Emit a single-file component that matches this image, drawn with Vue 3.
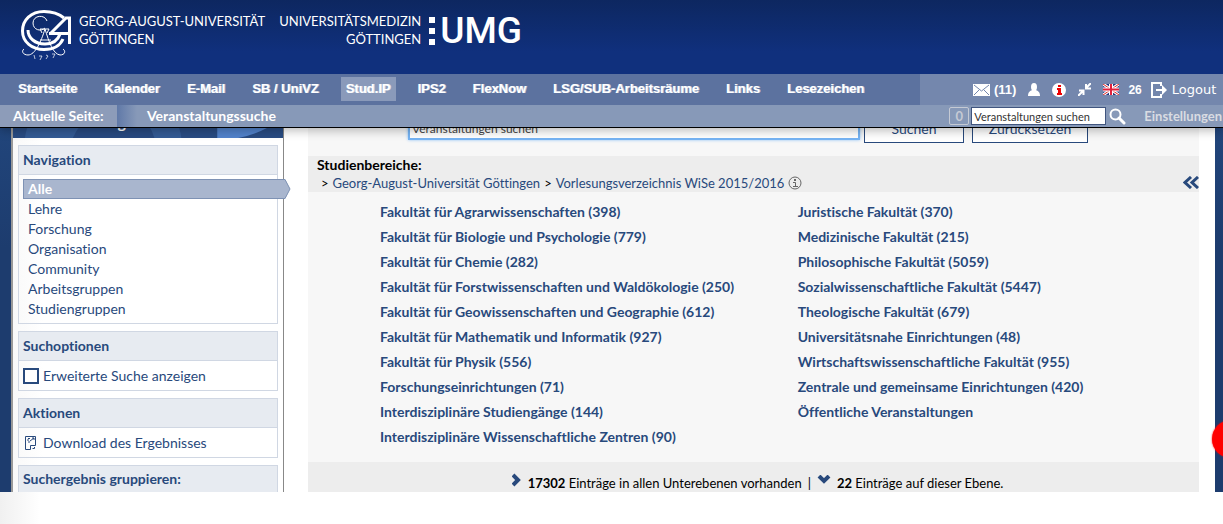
<template>
  <div class="page">
    <header class="header">
      <div class="brand">
        <svg class="seal" width="54" height="52" viewBox="0 0 54 52" fill="none" stroke="#fff" aria-hidden="true">
          <path d="M44 9C38 4 31 2.500 24 2.500C11 2.500 2.500 11 2.500 22S12 40.500 24 40.500C33 40.500 40 37 43 30" stroke-width="3" />
          <path d="M8 21c0 8 7 14 17 14c8 0 13-4 15-10" stroke-width="3" />
          <path d="M30 25L46 9h3.500v26" stroke-width="3" />
          <path d="M29 24.500h20" stroke-width="3" />
          <path d="M27 12c-2-7-14-6-14 2c0 7 8 9 12 5" stroke-width="1" />
          <path d="M25 20C21 33 15 46 8 46c-5 0-7-4-4-6M25 20C29 33 33 45 40 46c5 0 6-4 3-6M20 31h11M22 24l-2-4h9l-2 4" stroke-width="1" />
          <path d="M14 46l1 4M19 47h3l-2 4M26 46l2 1-2 3M32 45h3l-2 4" stroke-width="1" opacity="0.7" />
        </svg>
        <div class="brand-text">GEORG-AUGUST-UNIVERSITÄT<br />GÖTTINGEN</div>
        <div class="brand-text med">UNIVERSITÄTSMEDIZIN<br />GÖTTINGEN</div>
        <div class="dots" aria-hidden="true"><i></i><i></i><i></i></div>
        <div class="umg">UMG</div>
      </div>

      <div class="main-bar">
        <nav class="main-nav">
          <a v-for="item in mainNav" :key="item" href="#" :class="{ active: item === 'Stud.IP' }">{{ item }}</a>
        </nav>
        <div class="tools">
          <a href="#" class="mail">
            <svg width="17" height="12" viewBox="0 0 17 12" aria-hidden="true"><path d="M0 0h17v12H0z" fill="#fff" /><path d="M1 1l7.500 6L16 1M1 11l5-5M16 11l-5-5" fill="none" stroke="#7487ad" /></svg>
            (11)
          </a>
          <a href="#" class="tool" aria-label="Profil">
            <svg width="12" height="13" viewBox="0 0 12 13" fill="#fff"><ellipse cx="6" cy="4" rx="3" ry="4" /><path d="M0 13c0-4 2-5 4-6h4c2 1 4 2 4 6z" /></svg>
          </a>
          <a href="#" class="tool" aria-label="Information">
            <svg width="14" height="14" viewBox="0 0 14 14"><circle cx="7" cy="7" r="7" fill="#fff" /><path d="M6 2h3v2H6zM5 5h4v5h1v2H5v-2h1V7H5z" fill="#e00" /></svg>
          </a>
          <a href="#" class="tool" aria-label="Verkleinern">
            <svg width="13" height="13" viewBox="0 0 13 13" fill="none" stroke="#fff" stroke-width="2"><path d="M13 0L8 5M8 1v4.500h5" /><path d="M0 13l5-5M1 7.500h4.500V12" /></svg>
          </a>
          <a href="#" class="tool" aria-label="English">
            <svg width="16" height="11" viewBox="0 0 16 11"><path d="M0 0h16v11H0z" fill="#26377e" /><path d="M0 0l16 11M16 0L0 11" stroke="#fff" stroke-width="3" /><path d="M0 0l16 11M16 0L0 11" stroke="#d22" /><path d="M8 0v11M0 5.500h16" stroke="#fff" stroke-width="4" /><path d="M8 0v11M0 5.500h16" stroke="#e1203c" stroke-width="2" /></svg>
          </a>
          <span class="count">26</span>
          <a href="#" class="logout">
            <svg width="17" height="16" viewBox="0 0 17 16" fill="none" stroke="#fff" stroke-width="2"><path d="M10 4V1H1v14h9v-3" /><path d="M5 8h7" /><path d="M11 3l5 5-5 5z" fill="#fff" stroke="none" /></svg>
            Logout
          </a>
        </div>
      </div>

      <div class="sub-bar">
        <span class="current-label">Aktuelle Seite:</span>
        <span class="current">Veranstaltungssuche</span>
        <form class="quick" @submit.prevent>
          <span class="badge">0</span>
          <input v-model="quickSearch" type="text" aria-label="Schnellsuche" />
          <button type="submit" aria-label="Suche starten">
            <svg width="17" height="17" viewBox="0 0 17 17" fill="none" stroke="#fff"><circle cx="6.500" cy="6.500" r="5" stroke-width="2" /><path d="M10 10l5 5" stroke-width="3" stroke-linecap="round" /></svg>
          </button>
          <a href="#">Einstellungen</a>
        </form>
      </div>
    </header>

    <div class="body">
      <aside class="sidebar">
        <div class="banner">
          <svg viewBox="0 0 271 40" preserveAspectRatio="none" aria-hidden="true">
            <path d="M0 0h271v40H0z" fill="#294c83" />
            <path d="M12 40Q14 20 35 0h110q22 20 24 40z" fill="#345b95" />
            <path d="M60 40Q66 26 80 16h45q13 10 17 24z" fill="#284a81" />
            <path d="M205 40V0h66v20q-20 15-45 20z" fill="#5283cc" />
          </svg>
          <span>Veranstaltungssuche</span>
        </div>

        <section class="box">
          <h2>Navigation</h2>
          <ul class="nav-list">
            <li v-for="item in sideNav" :key="item" :class="{ active: item === 'Alle' }">
              <a href="#">{{ item }}</a>
              <svg v-if="item === 'Alle'" class="arrow" width="8" height="20" viewBox="0 0 8 20" aria-hidden="true"><path d="M0 0H2L7 10L2 20H0z" fill="#a9b6ce" /><path d="M0 .5H2L7 10L2 19.500H0" fill="none" stroke="#7e92b4" /></svg>
            </li>
          </ul>
        </section>

        <section class="box">
          <h2>Suchoptionen</h2>
          <label class="box-row"><input v-model="extended" type="checkbox" />Erweiterte Suche anzeigen</label>
        </section>

        <section class="box">
          <h2>Aktionen</h2>
          <a href="#" class="box-row">
            <svg class="download" width="16" height="16" viewBox="0 0 16 16" fill="none" stroke="#28497c" aria-hidden="true"><path d="M7.500 14.500h-5v-13h10v9h-5z" /><path d="M11.500 12v1.500h-2M5 4v2M6 6v2M7 6l4-3M9 3h2v2M5 3.500h2" /></svg>
            Download des Ergebnisses
          </a>
        </section>

        <section class="box last">
          <h2>Suchergebnis gruppieren:</h2>
        </section>
      </aside>

      <main class="content">
        <form class="search" @submit.prevent>
          <input v-model="search" type="text" aria-label="Veranstaltungen suchen" />
          <button type="submit">Suchen</button>
          <button type="reset" class="reset">Zurücksetzen</button>
        </form>

        <div class="areas">
          <div>
            <strong>Studienbereiche:</strong>
            <div class="crumbs">
              <span>&gt;</span>
              <a href="#">Georg-August-Universität Göttingen</a>
              <span>&gt;</span>
              <a href="#">Vorlesungsverzeichnis WiSe 2015/2016</a>
              <svg width="14" height="14" viewBox="0 0 14 14" fill="none" stroke="#666" aria-hidden="true"><circle cx="7" cy="7" r="6" /><path d="M5 6.500h2.500V10M5 10.500h5" /><path d="M6 4h2" stroke-width="2" /></svg>
            </div>
          </div>
          <a href="#" class="back" aria-label="Eine Ebene zurück">
            <svg width="16" height="13" viewBox="0 0 16 13" fill="none" stroke="#28497c" stroke-width="3"><path d="M8 1L2 6.500L8 12M15 1L9 6.500L15 12" /></svg>
          </a>
        </div>

        <div class="faculties">
          <ul v-for="(column, i) in faculties" :key="i">
            <li v-for="name in column" :key="name"><a href="#">{{ name }}</a></li>
          </ul>
        </div>

        <div class="summary">
          <svg width="10" height="14" viewBox="0 0 10 14" fill="none" stroke="#28497c" stroke-width="4" aria-hidden="true"><path d="M1 2l5 5-5 5" /></svg>
          <span><b>17302</b> Einträge in allen Unterebenen vorhanden</span>
          <span>|</span>
          <svg width="14" height="10" viewBox="0 0 14 10" fill="none" stroke="#28497c" stroke-width="4" aria-hidden="true"><path d="M2 1l5 5 5-5" /></svg>
          <span><b>22</b> Einträge auf dieser Ebene.</span>
        </div>
      </main>

      <div class="alert" aria-hidden="true"></div>
    </div>
    <div class="bottom"></div>
  </div>
</template>

<script setup>
import { ref } from 'vue'

const quickSearch = ref('Veranstaltungen suchen')
const search = ref('Veranstaltungen suchen')
const extended = ref(false)

const mainNav = [
  'Startseite', 'Kalender', 'E-Mail', 'SB / UniVZ', 'Stud.IP',
  'IPS2', 'FlexNow', 'LSG/SUB-Arbeitsräume', 'Links', 'Lesezeichen'
]

const sideNav = ['Alle', 'Lehre', 'Forschung', 'Organisation', 'Community', 'Arbeitsgruppen', 'Studiengruppen']

const faculties = [
  [
    'Fakultät für Agrarwissenschaften (398)',
    'Fakultät für Biologie und Psychologie (779)',
    'Fakultät für Chemie (282)',
    'Fakultät für Forstwissenschaften und Waldökologie (250)',
    'Fakultät für Geowissenschaften und Geographie (612)',
    'Fakultät für Mathematik und Informatik (927)',
    'Fakultät für Physik (556)',
    'Forschungseinrichtungen (71)',
    'Interdisziplinäre Studiengänge (144)',
    'Interdisziplinäre Wissenschaftliche Zentren (90)'
  ],
  [
    'Juristische Fakultät (370)',
    'Medizinische Fakultät (215)',
    'Philosophische Fakultät (5059)',
    'Sozialwissenschaftliche Fakultät (5447)',
    'Theologische Fakultät (679)',
    'Universitätsnahe Einrichtungen (48)',
    'Wirtschaftswissenschaftliche Fakultät (955)',
    'Zentrale und gemeinsame Einrichtungen (420)',
    'Öffentliche Veranstaltungen'
  ]
]
</script>

<style>
body { margin: 0; background: #fff; }
</style>

<style scoped>
.page { overflow: hidden; font-family: Lato, "Liberation Sans", sans-serif; font-size: 14px; line-height: 20px; font-variant-ligatures: none; color: #000; }
.page * { box-sizing: border-box; }
a { color: #28497c; text-decoration: none; }
ul { list-style: none; margin: 0; padding: 0; }
svg { display: block; flex: none; }
input, button { font-family: inherit; }

.header { position: relative; z-index: 2; border-bottom: 1px solid #000; box-shadow: 0 2px 10px rgba(0,0,0,0.3); white-space: nowrap; }
.brand { height: 74px; padding: 9px 20px 0; display: flex; align-items: flex-start; color: #fff; background: linear-gradient(#0d2760, #10307d 70%); }
.brand-text { font-size: 13px; line-height: 18px; margin: 3px 0 0 5px; }
.brand-text.med { margin-left: 14px; text-align: right; }
.dots { display: flex; flex-direction: column; gap: 5px; margin: 8px 0 0 8px; }
.dots i { width: 6px; height: 6px; background: #fff; }
.umg { font-family: Roboto, sans-serif; font-size: 37px; line-height: 44px; font-weight: 500; margin-left: 5px; }

.main-bar { display: flex; justify-content: space-between; height: 31px; background: #5c729f; }
.main-nav { display: flex; align-items: flex-start; gap: 16px; padding: 3px 0 0 13px; }
.main-nav a { color: #fff; font: bold 13px/24px "Liberation Sans", Arial, sans-serif; padding: 0 6px 0 5px; text-shadow: 1px 0 0 rgba(255,255,255,0.6); }
.main-nav a.active { background: #8a9aba; }
.tools { display: flex; align-items: center; width: 303px; padding: 0 5px 0 53px; background: #7487ad; color: #fff; font: bold 13px/20px "Liberation Sans", Arial, sans-serif; }
.tools a { color: #fff; }
.mail, .logout { display: flex; align-items: center; gap: 4px; }
.tool { margin-left: 12px; }
.count { font-size: 12px; margin: 0 9px; }
.logout { font-weight: normal; font-family: "DejaVu Sans", sans-serif; font-size: 13px; }

.sub-bar { display: flex; align-items: stretch; height: 22px; background: #8799b8; color: #fff; font-weight: bold; line-height: 21px; }
.current-label { width: 117px; padding-left: 13px; background: #8d9cb9; }
.current { flex: 1; padding-left: 30px; background: linear-gradient(90deg, #6079a8, #8799b8 20px); }
.quick { display: flex; align-items: center; padding-right: 1px; }
.badge { width: 20px; height: 18px; border: 1px solid #c5cad4; border-radius: 2px; font-size: 13px; line-height: 16px; text-align: center; color: #c5cad4; margin-right: 2px; }
.quick input { width: 135px; height: 18px; border: 1px solid #40557f; padding: 0 2px; background: #fff; font-size: 11px; color: #333; }
.quick button { border: 0; padding: 0; margin: 0 18px 0 3px; background: none; }
.quick a { color: #d9dce2; font-size: 13px; }

.body { position: relative; display: flex; padding-right: 8px; background: linear-gradient(#21457b, #1d3c6e 120px); }
.sidebar { flex: none; width: 273px; margin-left: 11px; border-left: 2px solid #999; border-right: 1px solid #888; background: linear-gradient(90deg, #f9f9f9, #fff 30px); }
.banner { position: relative; height: 40px; margin-top: -30px; margin-bottom: 7px; padding: 14px 0 0 14px; color: #fff; font-size: 16px; font-weight: bold; }
.banner svg { position: absolute; inset: 0; width: 100%; height: 100%; }
.banner span { position: relative; }
.box { margin: 0 5px 7px; border: 1px solid #d0d7e3; }
.box h2 { margin: 0; padding: 0 4px; border-bottom: 1px solid #d0d7e3; background: #e7ebf1; color: #28497c; font-size: 14px; line-height: 28px; }
.box.last { margin-bottom: 0; border-bottom: 0; }
.box.last h2 { border-bottom: 0; line-height: 26px; }
.nav-list { padding: 4px 0; }
.nav-list li { padding-left: 9px; }
.nav-list li.active { position: relative; margin: 0 -6px 0 4px; padding-left: 4px; height: 20px; line-height: 18px; border: 1px solid #7e92b4; border-right: 0; background: #a9b6ce; }
.nav-list li.active a { color: #fff; font-weight: bold; }
.arrow { position: absolute; left: 100%; top: -1px; }
.box-row { display: flex; align-items: center; gap: 4px; height: 29px; padding: 0 4px; color: #28497c; }
.box-row input { appearance: none; width: 16px; height: 16px; margin: 0; border: 2px solid #28497c; background: #fff; }

.content { flex: 1; min-width: 0; padding: 0 16px 0 24px; background: #fff; }
.search { display: flex; align-items: flex-start; margin-top: -15px; height: 43px; padding-left: 100px; background: #f7f7f7; }
.search input { width: 452px; height: 27px; margin-right: 4px; padding: 4px 2px 0; border: 2px solid #75b3f3; background: #fff; color: #444; font-size: 12px; box-shadow: 0 0 3px #8fc3f8; }
.search button { width: 100px; height: 30px; margin-right: 8px; padding: 0; border: 1px solid #28497c; background: #fff; color: #28497c; font-size: 14px; }
.search .reset { width: 116px; }
.areas { display: flex; justify-content: space-between; align-items: flex-end; height: 36px; padding-left: 9px; background: #ededed; line-height: 18px; }
.crumbs { display: flex; align-items: center; gap: 4px; padding-left: 4px; font-size: 13px; }
.back { margin-bottom: 3px; }
.faculties { display: grid; grid-template-columns: 51% 49%; padding: 7px 0 13px 72px; background: #f7f7f7; font-weight: bold; line-height: 25px; }
.summary { display: flex; justify-content: center; align-items: center; gap: 6px; height: 30px; padding: 12px 0 0 8px; background: #ededed; font-size: 13px; }
.summary svg { margin-bottom: 6px; }

.alert { position: absolute; top: 292px; right: -28px; width: 39px; height: 38px; border-radius: 50%; background: #f00; box-shadow: 0 0 2px #f00; }
.bottom { height: 32px; background: linear-gradient(90deg, #f0f0f0, #fff 40px); }
</style>
